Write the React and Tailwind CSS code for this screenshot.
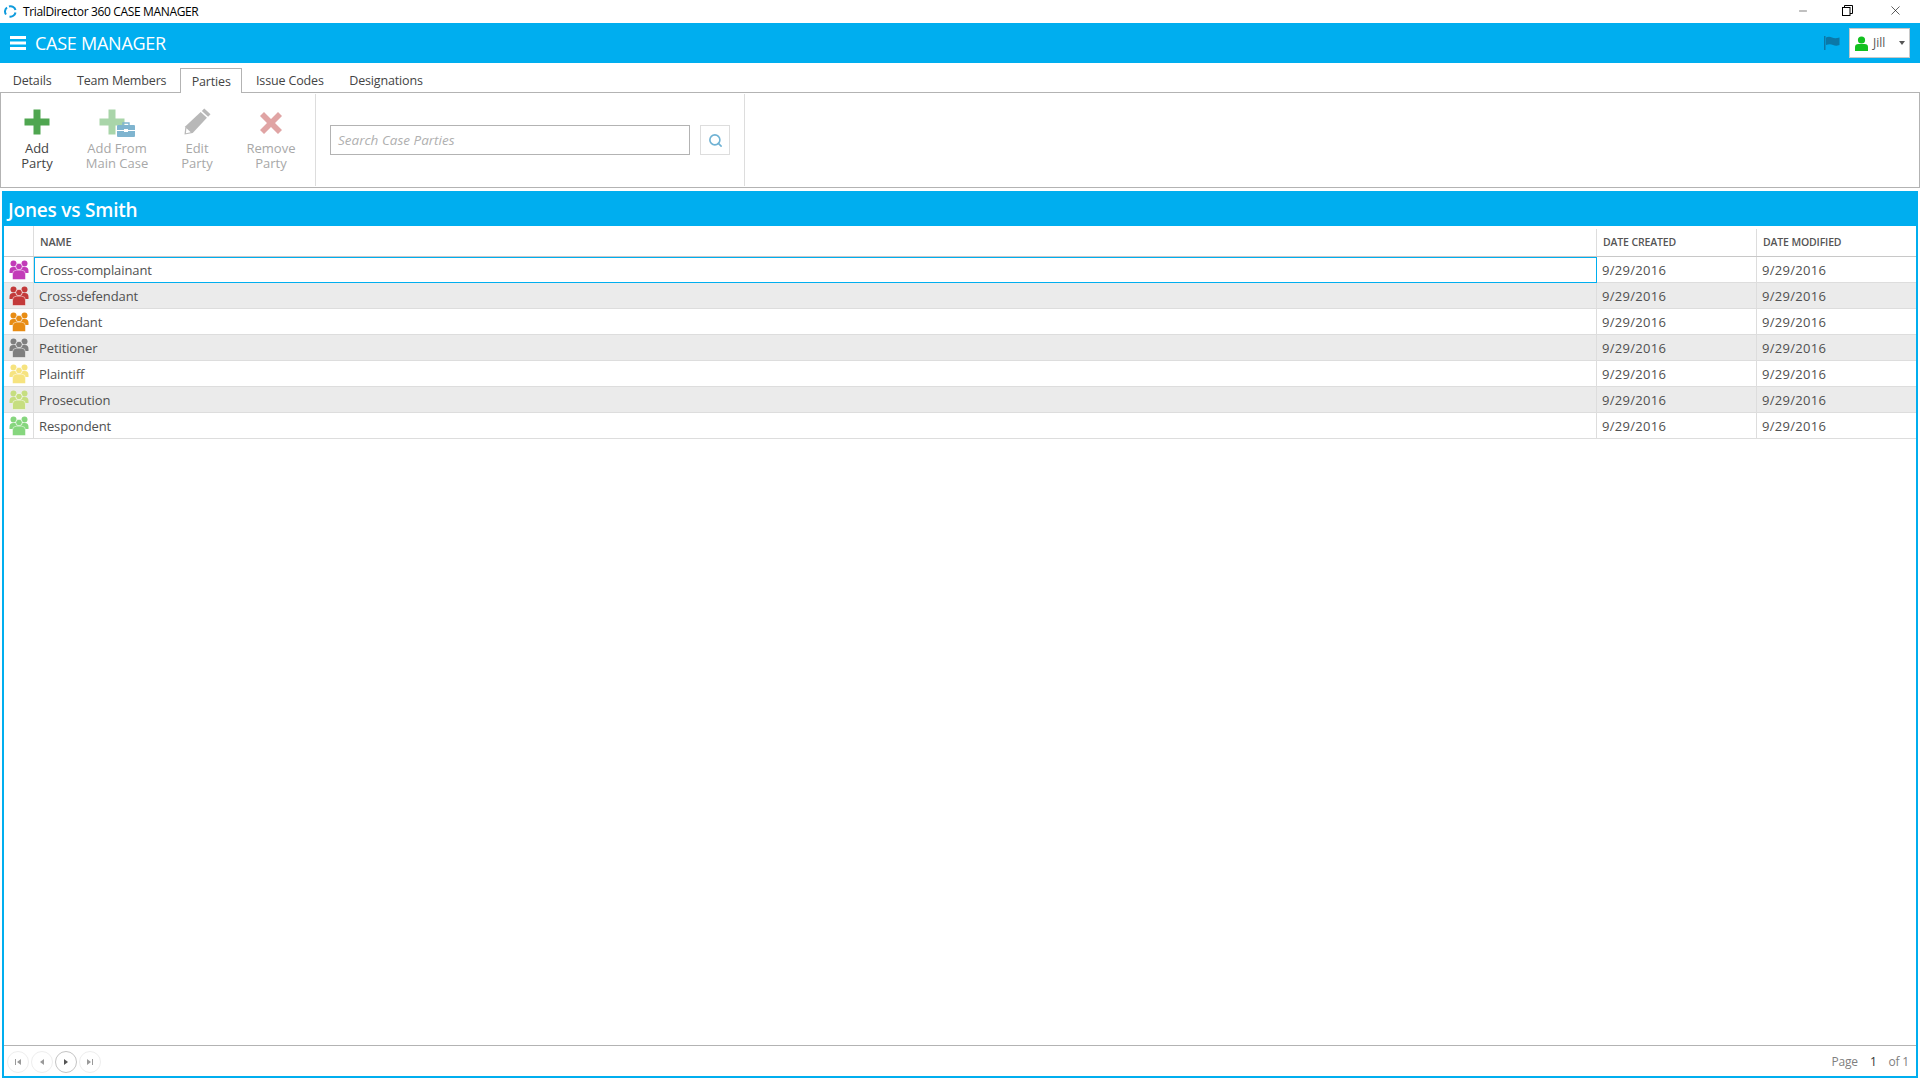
import { Search, X, Minus } from "lucide-react";

const FONT = "font-['Open_Sans','Noto_Sans',sans-serif]";

const ROWS = [
  { name: "Cross-complainant", color: "#c23bb8" },
  { name: "Cross-defendant", color: "#c33a3a" },
  { name: "Defendant", color: "#e88c14" },
  { name: "Petitioner", color: "#7f7f7f" },
  { name: "Plaintiff", color: "#f6e37f" },
  { name: "Prosecution", color: "#c6de80" },
  { name: "Respondent", color: "#86d67e" },
];

const TABS = ["Details", "Team Members", "Parties", "Issue Codes", "Designations"];

function PartyIcon({ color }) {
  return (
    <svg width="20" height="20" viewBox="0 0 20 20" fill={color}>
      <circle cx="4.5" cy="3.5" r="3" />
      <circle cx="15.5" cy="3.5" r="3" />
      <path d="M0.5 11 Q0.5 7 4 7 L16 7 Q19.5 7 19.5 11 L19.5 13 L0.5 13Z" />
      <circle cx="10" cy="6.5" r="3.3" stroke="#ffffff" strokeWidth="0.7" />
      <path d="M3.5 18.5 L3.5 14 Q3.5 10.2 7.5 10.2 L12.5 10.2 Q16.5 10.2 16.5 14 L16.5 18.5 Q16.5 19.5 15.5 19.5 L4.5 19.5 Q3.5 19.5 3.5 18.5Z" stroke="#ffffff" strokeWidth="0.5" />
    </svg>
  );
}

function PlusIcon({ color }) {
  return (
    <svg width="26" height="26" viewBox="0 0 26 26">
      <path d="M9.5 0.5h7v9h9v7h-9v9h-7v-9h-9v-7h9z" fill={color} />
    </svg>
  );
}

function ToolButton({ label, sub, width, disabled, icon }) {
  return (
    <div className={`flex flex-col items-center shrink-0 ${width}`}>
      <div className="h-[30px] flex items-end justify-center">{icon}</div>
      <div className={`mt-[6px] text-[13px] leading-[15px] text-center whitespace-nowrap ${disabled ? "text-[#a8a8a8]" : "text-[#444444]"}`}>
        <div>{label}</div>
        <div>{sub}</div>
      </div>
    </div>
  );
}

function Pager({ d, active }) {
  return (
    <div className={`w-[22px] h-[22px] rounded-full border flex items-center justify-center ${active ? "border-[#c4c4c4]" : "border-[#eeeeee]"}`}>
      <svg width="8" height="8" viewBox="0 0 8 8" fill={active ? "#555555" : "#9a9a9a"}>
        <path d={d} />
      </svg>
    </div>
  );
}

export default function App() {
  return (
    <div className={`w-[1920px] h-[1080px] overflow-hidden flex flex-col bg-white text-[#444444] ${FONT}`}>
      {/* window title bar */}
      <div className="h-[23px] flex items-center shrink-0">
        <svg className="ml-[4px]" width="13" height="13" viewBox="0 0 13 13" fill="none" stroke="#0f9bdc" strokeWidth="2">
          <path d="M2 9.5A5 5 0 0 1 3 2.5" />
          <path d="M5 1.5A5 5 0 0 1 11.5 5" />
          <path d="M11.5 7.5A5 5 0 0 1 5.5 11.5" />
        </svg>
        <span className="ml-[6px] text-[12px] tracking-[-0.35px] text-black whitespace-nowrap">TrialDirector 360 CASE MANAGER</span>
        <div className="ml-auto flex items-center text-black -mt-[2px]">
          <Minus size={12} strokeWidth={1} className="mr-[33px]" />
          <svg className="mr-[35px]" width="11" height="11" viewBox="0 0 11 11" fill="none" stroke="#000000">
            <rect x="0.5" y="2.5" width="7.5" height="8" />
            <path d="M2.5 2.5V0.5H10.5V8.5H8" />
          </svg>
          <X size={15} strokeWidth={1} className="mr-[17px]" />
        </div>
      </div>

      {/* app header */}
      <div className="h-[40px] shrink-0 bg-[#00aeef] flex items-center text-white">
        <svg className="ml-[10px]" width="16" height="14" viewBox="0 0 16 14" fill="#ffffff">
          <rect x="0" y="0" width="16" height="3" />
          <rect x="0" y="5.5" width="16" height="3" />
          <rect x="0" y="11" width="16" height="3" />
        </svg>
        <span className="ml-[9px] text-[18px] tracking-[-0.25px] whitespace-nowrap">CASE MANAGER</span>
        <div className="ml-auto flex items-center">
          <svg width="16" height="14" viewBox="0 0 16 14" fill="#0b78a8">
            <path d="M0 0h1.5v14H0zM2 1.5Q5 0 8 1.5T15.5 1.5V9Q12 10.5 9 9T2 9z" />
          </svg>
          <div className="ml-[9px] mr-[10px] w-[61px] h-[30px] bg-white border border-[#c8c8c8] flex items-center text-[#555555]">
            <svg className="ml-[5px]" width="13" height="15" viewBox="0 0 13 15" fill="#12c01f">
              <circle cx="6.5" cy="4" r="3.6" />
              <path d="M0 15V11Q0 8 3.5 8H9.5Q13 8 13 11V15Z" />
            </svg>
            <span className="ml-[5px] text-[12px]">Jill</span>
            <div className="ml-auto mr-[4px] w-0 h-0 border-x-[3px] border-x-transparent border-t-[4px] border-t-[#555555]" />
          </div>
        </div>
      </div>

      {/* tabs */}
      <div className="h-[29px] shrink-0 flex items-end relative z-10">
        {TABS.map((tab) => {
          const active = tab === "Parties";
          return (
            <div
              key={tab}
              className={`flex items-center pt-[3px] mx-[1px] text-[12.5px] tracking-[-0.15px] text-[#444444] whitespace-nowrap ${
                active ? "h-[25px] -mb-px px-[10.5px] border border-b-0 border-[#b3b3b3] bg-white" : "h-[24px] px-[11.75px]"
              }`}
            >
              {tab}
            </div>
          );
        })}
      </div>

      {/* toolbar */}
      <div className="h-[96px] shrink-0 border border-[#b3b3b3] flex py-[1px]">
        <div className="w-[315px] shrink-0 border-r border-[#dddddd] flex pt-[11px] pl-[3px]">
          <ToolButton
            label="Add"
            sub="Party"
            width="w-[66px]"
            icon={<PlusIcon color="#4fa650" />}
          />
          <ToolButton
            label="Add From"
            sub="Main Case"
            width="w-[94px]"
            disabled
            icon={
              <div className="relative w-[36px] h-[26px]">
                <PlusIcon color="#a9d5a9" />
                <svg className="absolute right-0 bottom-[-2px]" width="18" height="15" viewBox="0 0 18 15">
                  <path d="M6 3V1h6v2" fill="none" stroke="#7fb4cf" strokeWidth="1.4" />
                  <rect x="0" y="3" width="18" height="12" rx="1" fill="#7fb4cf" />
                  <rect x="0" y="8" width="18" height="1" fill="#ffffff" />
                  <rect x="7" y="7" width="4" height="3" fill="#ffffff" />
                </svg>
              </div>
            }
          />
          <ToolButton
            label="Edit"
            sub="Party"
            width="w-[66px]"
            disabled
            icon={
              <svg width="27" height="27" viewBox="0 0 28 28">
                <path d="M21 0.5l6.5 6-2.5 2.7-6.5-6z" fill="#b8b8b8" />
                <path d="M17.3 4.2l6.5 6L9 26l-8.5 1.5L1.5 19z" fill="#b8b8b8" />
                <path d="M2.5 21l4.5 4.2-5 1z" fill="#ffffff" />
              </svg>
            }
          />
          <ToolButton
            label="Remove"
            sub="Party"
            width="w-[82px]"
            disabled
            icon={
              <svg width="24" height="24" viewBox="0 0 24 24">
                <path d="M5 1l7 7 7-7 4 4-7 7 7 7-4 4-7-7-7 7-4-4 7-7-7-7z" fill="#e0a4a4" />
              </svg>
            }
          />
        </div>
        <div className="w-[429px] shrink-0 border-r border-[#dddddd] flex items-center pl-[14px]">
          <div className="w-[360px] h-[30px] border border-[#b3b3b3] flex items-center pl-[7px] text-[13.5px] italic text-[#b0b0b0]">
            Search Case Parties
          </div>
          <div className="ml-[10px] w-[30px] h-[30px] border border-[#dddddd] flex items-center justify-center">
            <Search size={15} strokeWidth={2.6} className="text-[#6fb2d4]" />
          </div>
        </div>
      </div>

      {/* case panel */}
      <div className="mt-[3px] mx-[2px] mb-[2px] flex-1 min-h-0 flex flex-col border-x-2 border-b-2 border-[#00aeef]">
        <div className="h-[35px] pt-[3px] -mx-[2px] shrink-0 bg-[#00aeef] flex items-center pl-[6px] text-white text-[19px] font-semibold tracking-[-0.2px]">
          Jones vs Smith
        </div>

        <div className="flex-1 min-h-0 flex flex-col">
          <div className="h-[31px] pt-[3px] shrink-0 flex border-b border-[#c8c8c8] text-[10.5px] font-semibold tracking-[-0.15px] text-[#555555]">
            <div className="w-[30px] shrink-0 border-r border-[#dddddd] -mt-[3px]" />
            <div className="flex-1 pl-[6px] flex items-center border-r border-[#dddddd] text-[11px]">NAME</div>
            <div className="w-[160px] shrink-0 pl-[6px] flex items-center border-r border-[#dddddd]">DATE CREATED</div>
            <div className="w-[159px] shrink-0 pl-[6px] flex items-center">DATE MODIFIED</div>
          </div>

          {ROWS.map((row, i) => (
            <div
              key={row.name}
              className={`h-[26px] shrink-0 flex border-b border-[#dddddd] text-[13px] text-[#505050] ${i % 2 ? "bg-[#ebebeb]" : "bg-white"}`}
            >
              <div className="w-[30px] shrink-0 flex items-center justify-center border-r border-[#dddddd]">
                <PartyIcon color={row.color} />
              </div>
              <div className={`flex-1 pl-[5px] pt-[2px] tracking-[-0.1px] flex items-center border-r ${i === 0 ? "border border-[#00aeef] -mb-px pl-[4px] pt-[1px]" : "border-[#dddddd]"}`}>
                {row.name}
              </div>
              <div className="w-[160px] shrink-0 pl-[5px] pt-[2px] tracking-[0.3px] flex items-center border-r border-[#dddddd]">9/29/2016</div>
              <div className="w-[159px] shrink-0 pl-[5px] pt-[2px] tracking-[0.3px] flex items-center">9/29/2016</div>
            </div>
          ))}
        </div>

        {/* pager */}
        <div className="h-[31px] pt-[1px] shrink-0 border-t border-[#b3b3b3] flex items-center pl-[3px] pr-[7px] text-[12px] tracking-[-0.2px] text-[#808080]">
          <div className="flex gap-[2px]">
            <Pager d="M1 1h1v6H1zM7 1v6L3 4z" />
            <Pager d="M6 1v6L2 4z" />
            <Pager d="M2 1v6l4-3z" active />
            <Pager d="M7 1H6v6h1zM1 1v6l4-3z" />
          </div>
          <span className="ml-auto">Page</span>
          <span className="ml-[12px] text-[#333333]">1</span>
          <span className="ml-[12px]">of 1</span>
        </div>
      </div>
    </div>
  );
}
